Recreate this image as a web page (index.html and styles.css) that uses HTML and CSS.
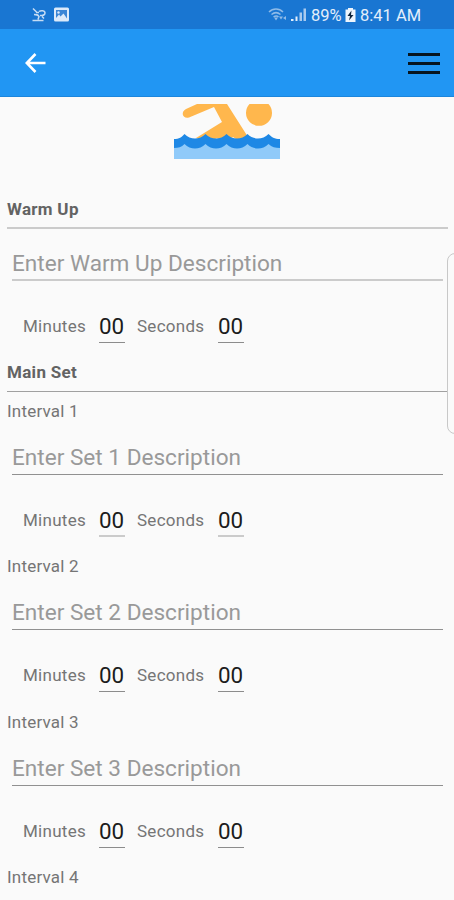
FILE: index.html
```
<!DOCTYPE html>
<html lang="en">
<head>
  <meta charset="utf-8">
  <title>Swim Workout</title>
  <link rel="stylesheet" href="styles.css">
</head>
<body>

  <div class="status-bar">
    <svg class="status-left" width="40" height="16" viewBox="0 0 40 16">
      <path d="M2 1.500l3.500 3.500M5 5.500h3M8 4.500c2-1.500 6-1 6 1.500s-2 2.500-5 2.500M3 7.500c3 0 4 0 5 2l-1 3M1.500 13.500h11M11 9.500l2 2" fill="none" stroke="#c6dcf4" stroke-width="1.500"/>
      <rect x="23" y="0.500" width="15" height="14" rx="1.500" fill="#dceafa"/>
      <path d="M25 3h11v8.500l-3.500-5-3 3-1.500-2-3 3.500z" fill="#3b86d6"/>
      <circle cx="27.500" cy="5.500" r="1.200" fill="#dceafa"/>
    </svg>
    <div class="status-right">
      <svg width="19" height="16" viewBox="0 0 19 16">
        <path d="M1 5c4-4 10-4 14 0M3.500 7.500c3-2.500 6-2.500 9 0M5.500 10c2-1.500 3.500-1.500 5 0" fill="none" stroke="#8fbbe8" stroke-width="1.500"/>
        <path d="M6 10.500h4l-2 3zM11 9.500h4l-2 3zM15 11l3-2v4z" fill="#8fbbe8"/>
      </svg>
      <svg class="signal" width="16" height="16" viewBox="0 0 16 16">
        <path d="M0 12h2.500v2H0zM4.500 9.500h2v4.500h-2z" fill="#e3eefb"/>
        <path d="M8.500 5.500h2.500v8.500H8.500zM12.500 1.500h2.500v12.500h-2.500z" fill="#a9caee"/>
      </svg>
      <span class="percent">89%</span>
      <svg class="battery" width="11" height="16" viewBox="0 0 11 16">
        <path d="M3 1h5v1.500h2.500V15H.5V2.500H3z" fill="#eef5fd"/>
        <path d="M6.500 3.500L2.500 9h2.500l-1 4.500L8.500 8H6z" fill="#10253d"/>
      </svg>
      <span class="clock">8:41 AM</span>
    </div>
  </div>

  <div class="app-bar">
    <svg width="22" height="20" viewBox="0 0 22 20">
      <path d="M10.500 1L1.800 10l8.700 9M2 10h18.500" fill="none" stroke="#fff" stroke-width="2.600"/>
    </svg>
    <div class="menu">
      <span></span>
      <span></span>
      <span></span>
    </div>
  </div>

  <div class="content">
    <svg class="swimmer" width="106" height="55" viewBox="0 0 106 55">
      <path d="M23 0h30l21 33c-4 4-12 3-15 0-6 5-12 5-16 1-5 4-12 4-21 0L48 18 40 3 15 13.500C9 15.500 6 8 12 5z" fill="#ffb74d"/>
      <path d="M75.500 0h19a13 13 0 1 1-19 0z" fill="#ffb74d"/>
      <path d="M0 38h106v17H0z" fill="#90caf9"/>
      <path d="M0 35c5 0 8-2 10.500-5 6 6 15 6 21 0 6 6 15 6 21 0 6 6 15 6 21 0 6 6 15 6 21 0 3 3 6 5 11.500 5v9c-5 0-8-1-11.500-4-6 6-15 6-21 0-6 6-15 6-21 0-6 6-15 6-21 0-6 6-15 6-21 0-3 3-6 4-10.500 4z" fill="#1e88e5"/>
    </svg>

    <div class="section-title thick">Warm Up</div>
    <div class="entry">
      <div class="description thick">Enter Warm Up Description</div>
      <div class="time">
        <span class="minutes">Minutes</span><span class="value">00</span>
        <span class="seconds">Seconds</span><span class="value">00</span>
      </div>
    </div>

    <div class="section-title main-set">Main Set</div>

    <div class="interval">Interval 1</div>
    <div class="entry">
      <div class="description">Enter Set 1 Description</div>
      <div class="time">
        <span class="minutes">Minutes</span><span class="value thick">00</span>
        <span class="seconds">Seconds</span><span class="value thick">00</span>
      </div>
    </div>

    <div class="interval">Interval 2</div>
    <div class="entry">
      <div class="description">Enter Set 2 Description</div>
      <div class="time">
        <span class="minutes">Minutes</span><span class="value">00</span>
        <span class="seconds">Seconds</span><span class="value">00</span>
      </div>
    </div>

    <div class="interval">Interval 3</div>
    <div class="entry">
      <div class="description">Enter Set 3 Description</div>
      <div class="time">
        <span class="minutes">Minutes</span><span class="value">00</span>
        <span class="seconds">Seconds</span><span class="value">00</span>
      </div>
    </div>

    <div class="interval">Interval 4</div>
  </div>

  <div class="edge-handle"></div>

</body>
</html>
```

FILE: styles.css
```
* {
  box-sizing: border-box;
}

body {
  margin: 0;
  height: 900px;
  overflow: hidden;
  position: relative;
  font-family: Roboto, sans-serif;
  background: #fafafa;
  color: #757575;
}

.status-bar {
  height: 29px;
  padding: 1px 32px 0 31px;
  display: flex;
  align-items: center;
  justify-content: space-between;
  background: #1976d2;
  color: #e3eefb;
  font-size: 16.500px;
}

.status-right {
  display: flex;
  align-items: center;
}

.signal {
  margin-left: 4px;
}

.percent {
  width: 31px;
  margin-left: 4px;
}

.battery {
  margin: 0 4px 0 3px;
}

.clock {
  width: 62px;
  white-space: nowrap;
}

.app-bar {
  height: 68px;
  padding: 1px 14px 0 25px;
  display: flex;
  align-items: center;
  justify-content: space-between;
  background: #2196f3;
  border-bottom: 1px solid #1c86dc;
}

.menu {
  width: 32px;
  display: flex;
  flex-direction: column;
  gap: 6px;
}

.menu span {
  height: 3px;
  background: #07151f;
}

.content {
  padding: 7px 6px 0 7px;
}

.swimmer {
  display: block;
  margin: 0 auto 39px 167px;
}

.section-title {
  height: 31px;
  line-height: 23px;
  font-size: 17px;
  font-weight: 700;
  letter-spacing: 0.300px;
  color: #636363;
  border-bottom: 1px solid #a0a0a0;
}

.section-title.thick {
  border-bottom: 2px solid #cbcbcb;
}

.section-title.main-set {
  margin-bottom: 8px;
}

.entry {
  padding: 0 5px;
}

.description {
  height: 52px;
  padding-top: 20px;
  line-height: 30px;
  font-size: 22.600px;
  color: #999;
  border-bottom: 1px solid #909090;
}

.description.thick {
  border-bottom: 2px solid #cbcbcb;
}

.time {
  height: 80.200px;
  padding: 31px 0 0 11px;
  display: flex;
  align-items: flex-start;
  line-height: 28px;
  font-size: 17px;
  letter-spacing: 0.280px;
}

.minutes {
  width: 76px;
}

.seconds {
  width: 81px;
  margin-left: 12px;
}

.value {
  width: 26px;
  height: 31px;
  font-size: 22.400px;
  letter-spacing: 0;
  color: #1c1c1c;
  border-bottom: 1px solid #8c8c8c;
}

.value.thick {
  border-bottom: 2px solid #cbcbcb;
}

.interval {
  height: 23px;
  line-height: 23px;
  font-size: 17px;
  letter-spacing: 0.200px;
}

/* system edge panel, drawn over the page */
.edge-handle {
  position: absolute;
  top: 253px;
  right: -9px;
  width: 16px;
  height: 181px;
  border: 1px solid #c8c8c8;
  border-radius: 9px;
  background: #fafafa;
}
```
